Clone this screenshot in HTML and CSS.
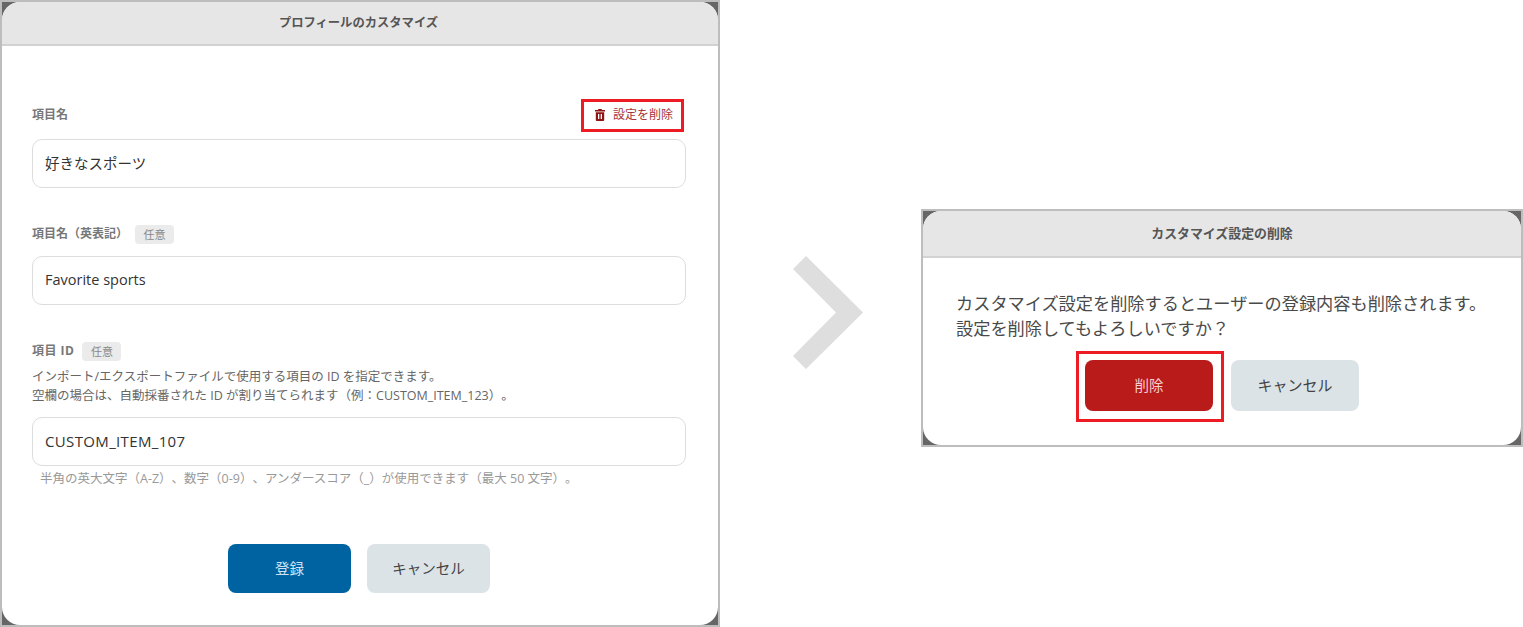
FILE: index.html
```html
<!DOCTYPE html>
<html lang="ja">
<head>
<meta charset="utf-8">
<title>プロフィールのカスタマイズ</title>
<link rel="stylesheet" href="styles.css">
</head>
<body>
<main class="stage">
  <section class="panel panel-form">
    <div class="panel-inner">
      <header class="panel-head">プロフィールのカスタマイズ</header>
      <form class="form">
        <div class="field field-first">
          <div class="label-row label-row-first">
            <span class="label">項目名</span>
            <a class="delete-link">
              <svg class="trash" viewBox="0 0 10 12" width="10" height="12" aria-hidden="true"><path fill="#8f1414" d="M3.4 0h3.2l.5 1H10v1.5H0V1h2.9zM.8 3.2h8.4V11a1 1 0 0 1-1 1H1.800a1 1 0 0 1-1-1z"/><path fill="#fff" d="M3 5h1.300v5H3zM5.700 5H7v5H5.700z"/></svg>
              <span>設定を削除</span>
            </a>
          </div>
          <div class="input">好きなスポーツ</div>
        </div>
        <div class="field field-second">
          <div class="label-row">
            <span class="label">項目名（英表記）</span>
            <span class="badge">任意</span>
          </div>
          <div class="input">Favorite sports</div>
        </div>
        <div class="field field-third">
          <div class="label-row">
            <span class="label label-id">項目 ID</span>
            <span class="badge">任意</span>
          </div>
          <p class="help">インポート/エクスポートファイルで使用する項目の ID を指定できます。<br>空欄の場合は、自動採番された ID が割り当てられます（例：CUSTOM_ITEM_123）。</p>
          <div class="input input-code">CUSTOM_ITEM_107</div>
          <p class="hint">半角の英大文字（A-Z）、数字（0-9）、アンダースコア（_）が使用できます（最大 50 文字）。</p>
        </div>
        <div class="actions">
          <span class="btn btn-primary">登録</span>
          <span class="btn btn-muted">キャンセル</span>
        </div>
      </form>
    </div>
  </section>

  <svg class="arrow" viewBox="0 0 70 113" width="70" height="113" aria-hidden="true"><path fill="#dedede" d="M13 0 70 56.500 13 113 0 100 43 56.500 0 13z"/></svg>

  <section class="panel panel-confirm">
    <div class="panel-inner">
      <header class="panel-head">カスタマイズ設定の削除</header>
      <div class="confirm-body">
        <p class="message">カスタマイズ設定を削除するとユーザーの登録内容も削除されます。<br>設定を削除してもよろしいですか？</p>
        <div class="confirm-actions">
          <span class="highlight"><span class="btn btn-danger">削除</span></span>
          <span class="btn btn-muted btn-tall">キャンセル</span>
        </div>
      </div>
    </div>
  </section>
</main>
</body>
</html>
```
FILE: styles.css
```css
* { box-sizing: border-box; }
html, body { margin: 0; padding: 0; background: #fff; }
body {
  width: 1523px;
  height: 627px;
  overflow: hidden;
  font-family: "Open Sans", "Noto Sans CJK JP", sans-serif;
  color: #333;
  text-spacing-trim: space-all;
}
.stage { display: flex; align-items: flex-start; width: 1523px; height: 627px; }

.panel { border: 2px solid #bdbdbd; background: #666; flex: none; }
.panel-form { width: 720px; height: 627px; }
.panel-confirm { width: 602px; height: 238px; margin-top: 209px; }
.panel-inner { height: 100%; background: #fff; border-radius: 18px; overflow: hidden; }
.panel-head {
  background: #e6e6e6;
  border-bottom: 2px solid #d2d2d2;
  display: flex;
  align-items: center;
  justify-content: center;
  font-weight: 700;
  color: #555;
}
.panel-form .panel-head { height: 44px; padding: 0 3px 2px 0; font-size: 12.300px; }
.panel-confirm .panel-head { height: 47px; padding-bottom: 3px; font-size: 12.900px; }

.arrow { flex: none; align-self: center; margin: 0 58px 2px 73px; }

.form { padding: 0 32px 0 30px; }
.field-first { padding-top: 53px; }
.field-second { padding-top: 36px; }
.field-third { padding-top: 36px; }
.label-row { display: flex; align-items: center; gap: 8px; height: 20px; margin-bottom: 12px; }
.label-row-first { justify-content: space-between; height: 33px; margin: 0 2px 7px 0; }
.label { font-size: 12px; font-weight: 700; color: #777; line-height: 20px; }
.label-row-first .label { padding-bottom: 2px; }
.label-id { letter-spacing: .5px; }
.field-second .label-row { gap: 7px; }
.field-third .label-row { margin-bottom: 6px; }
.badge {
  font-size: 11px;
  color: #888;
  background: #ebebeb;
  border-radius: 4px;
  width: 39px;
  height: 19px;
  display: flex;
  align-items: center;
  justify-content: center;
}
.delete-link {
  display: flex;
  align-items: center;
  gap: 8px;
  width: 103px;
  height: 33px;
  padding: 0 0 2px 11px;
  border: 3px solid #ed1c24;
  font-size: 12px;
  color: #a8343a;
}
.delete-link span { padding-bottom: 2px; }
.trash { flex: none; }
.input {
  height: 49px;
  border: 1px solid #ddd;
  border-radius: 10px;
  padding: 0 12px 2px;
  display: flex;
  align-items: center;
  font-size: 14.500px;
  color: #333;
  background: #fff;
}
.input-code { font-size: 15px; letter-spacing: .35px; }
.help { margin: 0 0 12px; font-size: 12.500px; line-height: 19px; color: #666; }
.hint { margin: 4px 0 0; padding-left: 8px; font-size: 12.500px; line-height: 18px; color: #999; }
.actions { display: flex; justify-content: center; gap: 16px; margin-top: 56px; }

.btn {
  display: flex;
  align-items: center;
  justify-content: center;
  width: 123px;
  height: 49px;
  padding-bottom: 3px;
  border-radius: 8px;
  font-size: 14.500px;
  flex: none;
}
.btn-primary { background: #0063a1; color: #cfe3f5; }
.btn-muted { background: #dbe3e6; color: #444; }
.btn-danger { background: #b91a1a; color: #f6cccc; width: 128px; height: 51px; }
.btn-tall { width: 128px; height: 51px; margin-top: 9px; font-size: 15px; }

.confirm-body { padding: 33px 30px 0 33px; }
.message { margin: 0; font-size: 17.200px; line-height: 25px; color: #4a4a4a; white-space: nowrap; }
.confirm-actions { display: flex; align-items: flex-start; gap: 7px; margin-top: 10px; padding-left: 120px; }
.highlight { border: 3px solid #ed1c24; padding: 6px 8px 8px 6px; display: block; }
```
